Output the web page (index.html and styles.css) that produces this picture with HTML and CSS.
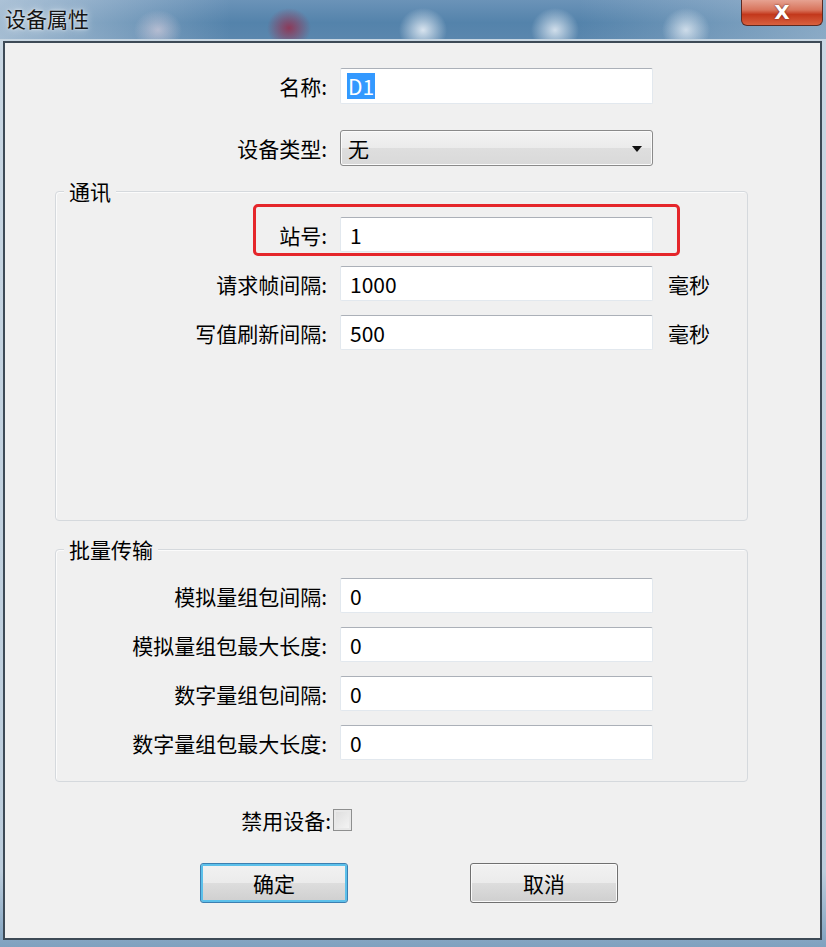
FILE: index.html
```html
<!DOCTYPE html>
<html>
  <head>
    <meta charset="UTF-8" />
    <title>设备属性</title>
    <link rel="stylesheet" href="styles.css">
  </head>
  <body>

    <div class="window">
      <div class="titlebar">
        <span class="title">设备属性</span>
        <div class="close-btn">X</div>
      </div>

      <div class="client">
        <div class="row top-row">
          <label class="field-label">名称:</label>
          <div class="field"><span class="selected">D1</span></div>
        </div>

        <div class="row top-row row-select">
          <label class="field-label">设备类型:</label>
          <div class="select">无</div>
        </div>

        <div class="group group-comm">
          <div class="group-title">通讯</div>
          <div class="group-body">
            <div class="row marked">
              <label class="field-label">站号:</label>
              <div class="field">1</div>
            </div>
            <div class="row">
              <label class="field-label">请求帧间隔:</label>
              <div class="field">1000</div>
              <span class="unit">毫秒</span>
            </div>
            <div class="row">
              <label class="field-label">写值刷新间隔:</label>
              <div class="field">500</div>
              <span class="unit">毫秒</span>
            </div>
          </div>
        </div>

        <div class="group group-batch">
          <div class="group-title">批量传输</div>
          <div class="group-body batch-body">
            <div class="row">
              <label class="field-label">模拟量组包间隔:</label>
              <div class="field">0</div>
            </div>
            <div class="row">
              <label class="field-label">模拟量组包最大长度:</label>
              <div class="field">0</div>
            </div>
            <div class="row">
              <label class="field-label">数字量组包间隔:</label>
              <div class="field">0</div>
            </div>
            <div class="row">
              <label class="field-label">数字量组包最大长度:</label>
              <div class="field">0</div>
            </div>
          </div>
        </div>

        <div class="check-row">
          <label class="check-label">禁用设备:</label>
          <div class="checkbox"></div>
        </div>

        <div class="buttons">
          <div class="btn btn-default">确定</div>
          <div class="btn">取消</div>
        </div>
      </div>
    </div>

  </body>
</html>
```

FILE: styles.css
```css
body {
  margin: 0;
  font-family: "Noto Sans CJK SC", "Microsoft YaHei", sans-serif;
  font-size: 21px;
  color: #000;
  background: #c3d3e0;
}

.window {
  width: 826px;
  height: 947px;
  box-sizing: border-box;
  padding: 0 4px 7px 3px;
  display: flex;
  flex-direction: column;
  background: linear-gradient(180deg, #c9d7e3 0%, #bccddc 92%, #7fa1bf 100%);
}

/* title bar with blurred aero glass */
.titlebar {
  height: 41px;
  margin: 0 -4px 0 -3px;
  padding-left: 5px;
  display: flex;
  justify-content: space-between;
  align-items: flex-start;
  background:
    radial-gradient(ellipse 24px 20px at 158px 30px, rgba(238, 220, 230, 0.55), transparent),
    radial-gradient(ellipse 22px 20px at 289px 28px, rgba(150, 45, 75, 0.85), transparent),
    radial-gradient(ellipse 24px 22px at 423px 30px, rgba(230, 238, 246, 0.9), transparent),
    radial-gradient(ellipse 24px 22px at 555px 30px, rgba(230, 238, 246, 0.85), transparent),
    radial-gradient(ellipse 24px 22px at 686px 30px, rgba(230, 238, 246, 0.8), transparent),
    linear-gradient(90deg, rgba(215, 225, 235, 0.6) 0%, rgba(215, 225, 235, 0) 28%, rgba(0, 0, 0, 0) 70%, rgba(200, 215, 228, 0.45) 100%),
    linear-gradient(180deg, #6b93b8 0%, #5483ab 55%, #5b87ae 100%);
  box-shadow: inset 0 -2px 0 #c7d6e2;
}

.title {
  line-height: 36px;
  color: #151515;
  text-shadow: 0 0 8px rgba(255, 255, 255, 0.85), 0 0 3px rgba(255, 255, 255, 0.7);
}

.close-btn {
  width: 80px;
  height: 25px;
  margin-right: 3px;
  border: 1px solid #5c2a22;
  border-top: none;
  border-radius: 0 0 6px 6px;
  background: linear-gradient(180deg, #e6a291 0%, #d8745c 40%, #c3381c 58%, #d9613f 100%);
  color: #fff;
  font-family: "DejaVu Sans", sans-serif;
  font-weight: bold;
  font-size: 20px;
  line-height: 24px;
  text-align: center;
  text-shadow: 0 0 2px #5a1c10;
}

.client {
  flex: 1;
  border: 2px solid #3d4a56;
  background: #f0f0f0;
  padding-top: 25px;
}

.row {
  display: flex;
  align-items: center;
  height: 35px;
}

.top-row {
  height: 36px;
}

.row-select {
  margin-top: 26px;
}

.field-label {
  width: 271px;
  margin-right: 13px;
  text-align: right;
  white-space: nowrap;
}

.top-row .field-label {
  width: 322px;
}

.field {
  width: 313px;
  height: 100%;
  box-sizing: border-box;
  padding-left: 9px;
  border: 1px solid #e2e8ee;
  border-top-color: #abb0b8;
  border-radius: 2px;
  background: #fff;
  display: flex;
  align-items: center;
}

.selected {
  background: #3399ff;
  color: #fff;
  padding: 0 1px;
  margin-left: -3px;
  line-height: 26px;
}

.select {
  position: relative;
  width: 313px;
  height: 100%;
  box-sizing: border-box;
  padding-left: 7px;
  border: 1px solid #8a8a8a;
  border-radius: 3px;
  background: linear-gradient(180deg, #f3f3f3 0%, #ebebeb 50%, #dedede 51%, #d9d9d9 100%);
  box-shadow: inset 0 0 0 1px #fbfbfb;
  display: flex;
  align-items: center;
}

.select::after {
  content: "";
  position: absolute;
  right: 10px;
  top: 15px;
  border-left: 5px solid transparent;
  border-right: 5px solid transparent;
  border-top: 6px solid #111;
}

.unit {
  margin-left: 15px;
}

/* group boxes */
.group {
  width: 693px;
  box-sizing: border-box;
  margin-left: 50px;
  border: 1px solid #d5d9dd;
  border-radius: 4px;
  box-shadow: inset 1px 1px 0 #fbfbfb;
}

.group-comm {
  margin-top: 25px;
  height: 330px;
}

.group-batch {
  margin-top: 28px;
  height: 233px;
}

.group-title {
  width: fit-content;
  margin: -12px 0 0 8px;
  padding: 0 5px;
  height: 22px;
  line-height: 22px;
  background: #f0f0f0;
}

.group-body {
  display: flex;
  flex-direction: column;
  gap: 14px;
  margin-top: 15px;
}

.batch-body {
  margin-top: 18px;
}

.row.marked {
  position: relative;
}

/* red annotation around the station row */
.row.marked::after {
  content: "";
  position: absolute;
  left: 197px;
  top: -13px;
  width: 427px;
  height: 52px;
  box-sizing: border-box;
  border: 3px solid #e5262b;
  border-radius: 5px;
}

.check-row {
  display: flex;
  align-items: center;
  height: 22px;
  margin-top: 27px;
}

.check-label {
  width: 326px;
  text-align: right;
  margin-right: 2px;
}

.checkbox {
  width: 17px;
  height: 20px;
  border: 1px solid #8e8f8f;
  background: linear-gradient(135deg, #dcdcdc, #f6f6f6);
  box-shadow: inset 0 0 0 2px #e8e8e8;
}

.buttons {
  display: flex;
  gap: 122px;
  margin-top: 32px;
  padding-left: 195px;
}

.btn {
  width: 148px;
  height: 40px;
  box-sizing: border-box;
  border: 1px solid #707070;
  border-radius: 3px;
  background: linear-gradient(180deg, #f2f2f2 0%, #ebebeb 50%, #dddddd 51%, #cfcfcf 100%);
  box-shadow: inset 0 0 0 1px #fafafa;
  display: flex;
  align-items: center;
  justify-content: center;
}

.btn-default {
  border-color: #3c7fb1;
  box-shadow: inset 0 0 0 2px #5cc0ea;
}
```
